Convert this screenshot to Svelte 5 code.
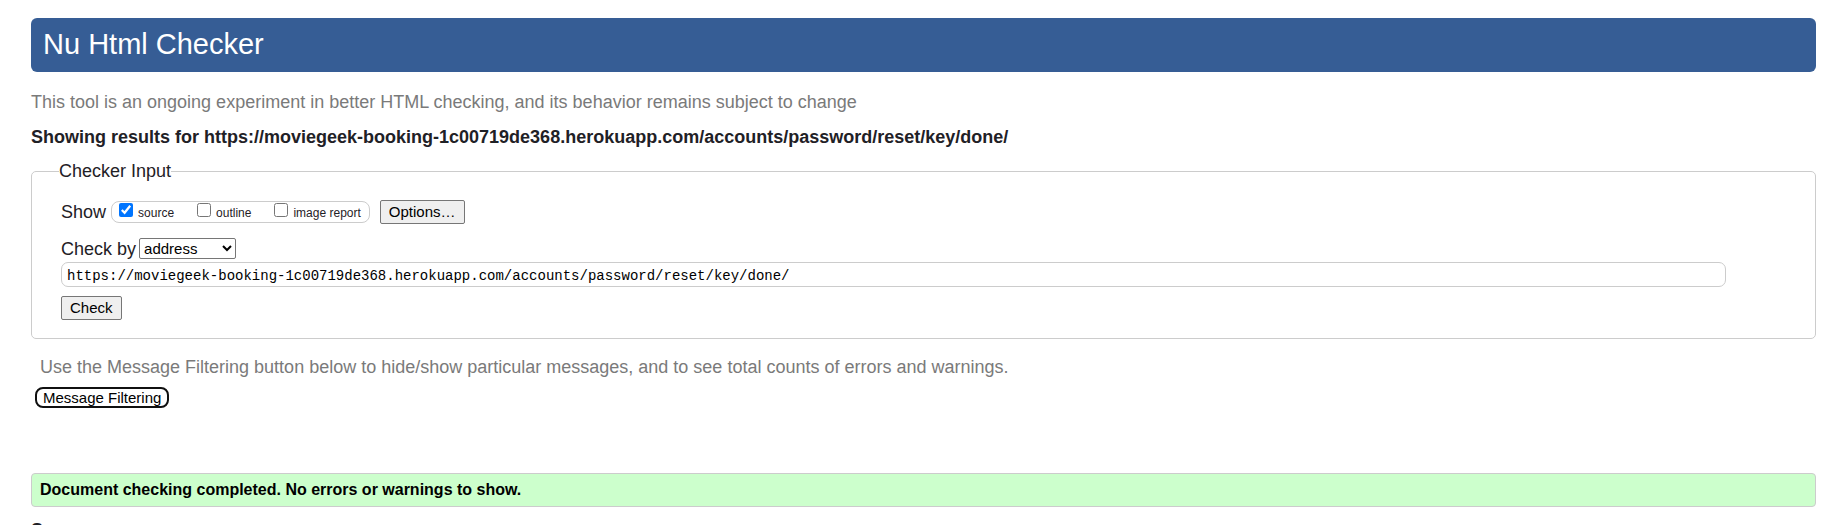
<script>
  const url = 'https://moviegeek-booking-1c00719de368.herokuapp.com/accounts/password/reset/key/done/';
  let address = $state(url);
  let method = $state('address');
  let show = $state([
    { id: 'source', label: 'source', on: true },
    { id: 'outline', label: 'outline', on: false },
    { id: 'imagereport', label: 'image report', on: false }
  ]);
</script>

<main>
  <h1>Nu Html Checker</h1>
  <p class="tagline">This tool is an ongoing experiment in better HTML checking, and its behavior remains subject to change</p>
  <h2>Showing results for {url}</h2>

  <form onsubmit={(e) => e.preventDefault()}>
    <fieldset>
      <legend>Checker Input</legend>
      <div class="row show">
        <span>Show</span>
        <div class="checks">
          {#each show as item (item.id)}
            <label for={item.id}>
              <input type="checkbox" id={item.id} bind:checked={item.on} />
              <span>{item.label}</span>
            </label>
          {/each}
        </div>
        <button type="button">Options…</button>
      </div>
      <div class="row method">
        <label for="method">Check by</label>
        <select id="method" bind:value={method}>
          <option value="address">address</option>
          <option value="file">file upload</option>
          <option value="text">text input</option>
        </select>
      </div>
      <input class="address" type="url" aria-label="Address" spellcheck="false" bind:value={address} />
      <button type="submit">Check</button>
    </fieldset>
  </form>

  <p class="hint">Use the Message Filtering button below to hide/show particular messages, and to see total counts of errors and warnings.</p>
  <button type="button" class="filtering">Message Filtering</button>

  <p class="success">Document checking completed. No errors or warnings to show.</p>
  <h2 class="source">Source</h2>
</main>

<style>
  :global(body) {
    background: #fff;
    overflow: hidden;
  }
  :global(#app) {
    height: 100vh;
    overflow: hidden;
  }
  main {
    padding: 18px 15px 0 31px;
    font: 18px/20px "Liberation Sans", Arial, sans-serif;
    color: #1f2126;
  }
  h1 {
    margin: 0;
    padding: 10px 12px 12px;
    border-radius: 6px;
    background: #365d95;
    color: #fff;
    font-size: 29px;
    font-weight: normal;
    line-height: 32px;
  }
  p,
  h2 {
    margin: 0;
  }
  h2 {
    font-size: 18px;
    line-height: 20px;
  }
  .tagline {
    margin: 20px 0 15px;
    color: #7a7a7a;
  }
  form {
    margin-top: 14px;
  }
  fieldset {
    min-width: 0;
    margin: 0;
    padding: 19px 1px 18px 29px;
    border: 1px solid #ccc;
    border-radius: 5px;
  }
  legend {
    margin-left: -2px;
    padding: 0;
  }
  .row {
    display: flex;
    align-items: center;
  }
  button {
    box-sizing: border-box;
    display: block;
    height: 24px;
    padding: 0 8px;
    border: 1px solid #767676;
    border-radius: 2px;
    background: #efefef;
    color: #000;
    font: 15px/22px "Liberation Sans", Arial, sans-serif;
  }
  .checks {
    box-sizing: border-box;
    display: flex;
    gap: 23px;
    height: 22px;
    margin: 0 10px 0 5px;
    padding: 0 8px 0 7px;
    border: 1px solid #ccc;
    border-radius: 8px;
    font-size: 12px;
    line-height: 22px;
  }
  .checks label {
    display: flex;
    align-items: flex-start;
    gap: 5px;
  }
  .checks input {
    width: 14px;
    height: 14px;
    margin: 1px 0 0;
  }
  .method {
    gap: 3px;
    margin-top: 14px;
  }
  select {
    box-sizing: border-box;
    width: 97px;
    height: 21px;
    padding: 0;
    border: 1px solid #767676;
    border-radius: 2px;
    background-color: #fff;
    color: #000;
    font: 15px "Liberation Sans", Arial, sans-serif;
  }
  .address {
    box-sizing: border-box;
    display: block;
    width: 95%;
    height: 25px;
    margin: 3px 0 9px;
    padding: 2px 5px 0;
    border: 1px solid #ccc;
    border-radius: 7px;
    color: #000;
    font: 14px "Liberation Mono", Consolas, monospace;
  }
  .hint {
    margin: 18px 9px 10px;
    color: #7a7a7a;
  }
  .filtering {
    height: 21px;
    margin-left: 4px;
    padding: 0 6px;
    border: 2px solid #101010;
    border-radius: 8px;
    background: #fff;
    line-height: 17px;
  }
  .success {
    margin-top: 65px;
    padding: 6px 8px;
    border: 1px solid #ccc;
    border-radius: 4px;
    background: #cfc;
    color: #000;
    font-size: 16px;
    font-weight: bold;
  }
  .source {
    margin-top: 13px;
  }
</style>
